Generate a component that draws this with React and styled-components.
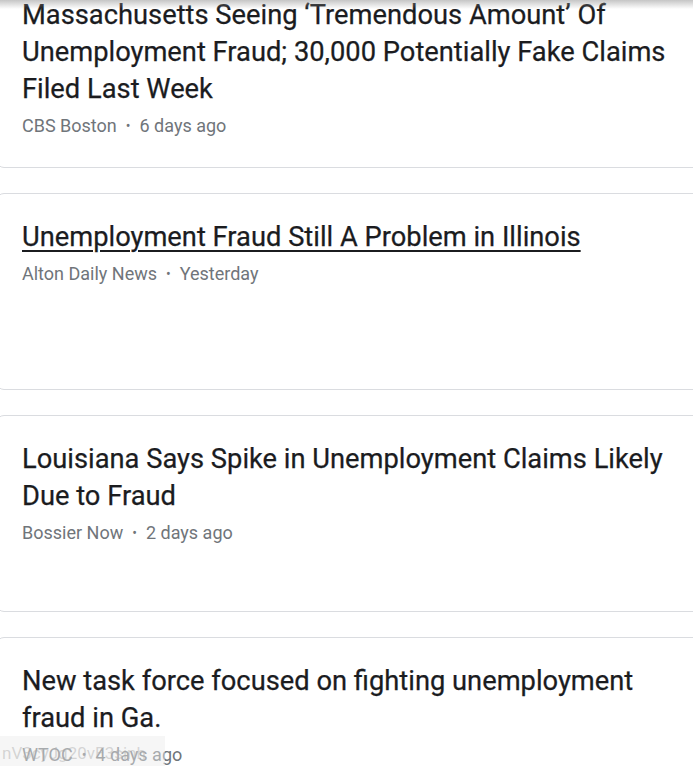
import React from "react";
import styled, { createGlobalStyle } from "styled-components";

const Global = createGlobalStyle`
  html, body { margin: 0; padding: 0; background: #fff; overflow: hidden; }
  body { font-family: Roboto, "Noto Sans", Arial, sans-serif; }
  #root { height: 766px; overflow: hidden; position: relative; }
`;

const List = styled.div`
  display: flex;
  flex-direction: column;
  gap: 25px;
  margin-top: -29px;
  margin-left: -4px;
  margin-right: -20px;
`;

const Card = styled.article`
  box-sizing: border-box;
  height: 197px;
  border: 1px solid #dadce0;
  border-radius: 8px;
  padding: 25px 20px 0 25px;
  background: #fff;
`;

const Title = styled.a`
  display: block;
  font-size: 27.3px;
  line-height: 37px;
  font-weight: 400;
  color: #1b1c1f;
  -webkit-text-stroke: 0.25px #1b1c1f;
  text-decoration: ${(p) => (p.$hover ? "underline" : "none")};
  text-decoration-thickness: 2px;
  text-underline-offset: 4px;
  max-width: 650px;
`;

const Meta = styled.div`
  margin-top: 6px;
  font-size: 18px;
  line-height: 24px;
  color: #70757a;
  display: flex;
  align-items: center;
`;

const Dot = styled.span`
  margin: 0 9px;
  font-size: 14px;
`;

const TopShade = styled.div`
  position: absolute;
  top: 0;
  left: 0;
  right: 0;
  height: 9px;
  background: linear-gradient(to bottom, rgba(150,150,150,0.55), rgba(255,255,255,0));
  pointer-events: none;
`;

const StatusBubble = styled.div`
  position: absolute;
  left: 0;
  bottom: 0;
  width: 165px;
  height: 30px;
  box-sizing: border-box;
  padding: 5px 0 0 2px;
  background: rgba(235, 235, 235, 0.45);
  color: rgba(170, 170, 170, 0.45);
  font-size: 17px;
  line-height: 24px;
  white-space: nowrap;
  overflow: hidden;
  pointer-events: none;
`;

const articles = [
  {
    title: "Massachusetts Seeing ‘Tremendous Amount’ Of Unemployment Fraud; 30,000 Potentially Fake Claims Filed Last Week",
    source: "CBS Boston",
    time: "6 days ago",
  },
  {
    title: "Unemployment Fraud Still A Problem in Illinois",
    source: "Alton Daily News",
    time: "Yesterday",
    hover: true,
  },
  {
    title: "Louisiana Says Spike in Unemployment Claims Likely Due to Fraud",
    source: "Bossier Now",
    time: "2 days ago",
  },
  {
    title: "New task force focused on fighting unemployment fraud in Ga.",
    source: "WTOC",
    time: "4 days ago",
  },
];

export default function App() {
  return (
    <>
      <Global />
      <List>
        {articles.map((a) => (
          <Card key={a.title}>
            <Title $hover={a.hover}>{a.title}</Title>
            <Meta>
              <span>{a.source}</span>
              <Dot>•</Dot>
              <span>{a.time}</span>
            </Meta>
          </Card>
        ))}
      </List>
      <TopShade />
      <StatusBubble>nV3cyJg20vE3sinh</StatusBubble>
    </>
  );
}
